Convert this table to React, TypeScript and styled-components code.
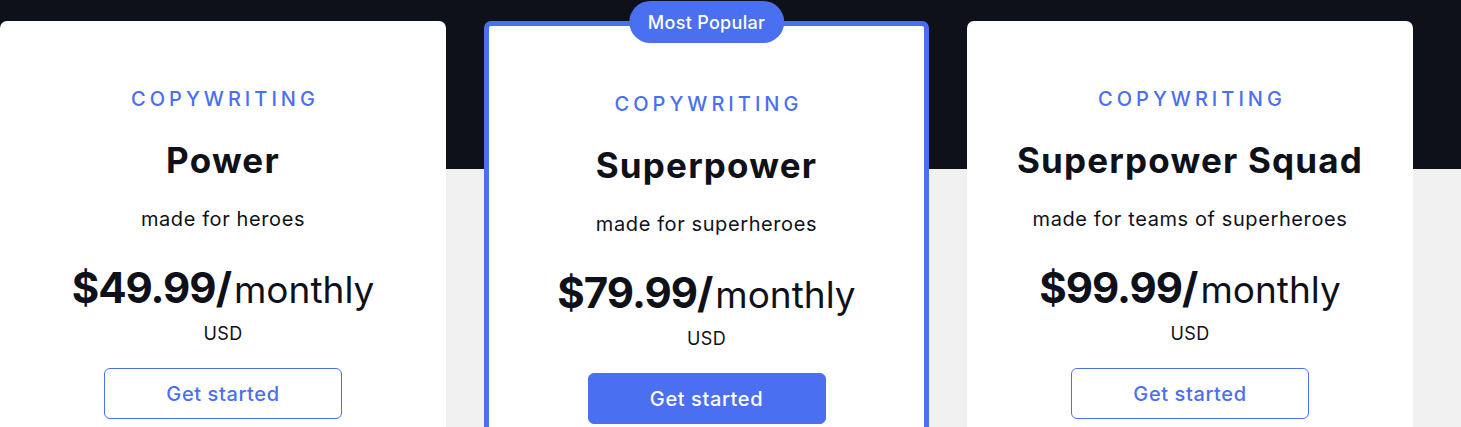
import styled, { createGlobalStyle } from "styled-components";

const GlobalStyle = createGlobalStyle`
  html, body {
    margin: 0;
    padding: 0;
    background: #f0f0f0;
    overflow: hidden;
  }
  * {
    box-sizing: border-box;
  }
`;

const BLUE = "#4a6ff0";
const INK = "#0f111a";

interface Plan {
  category: string;
  name: string;
  tagline: string;
  price: string;
  period: string;
  currency: string;
  featured?: boolean;
}

const plans: Plan[] = [
  {
    category: "COPYWRITING",
    name: "Power",
    tagline: "made for heroes",
    price: "$49.99/",
    period: "monthly",
    currency: "USD",
  },
  {
    category: "COPYWRITING",
    name: "Superpower",
    tagline: "made for superheroes",
    price: "$79.99/",
    period: "monthly",
    currency: "USD",
    featured: true,
  },
  {
    category: "COPYWRITING",
    name: "Superpower Squad",
    tagline: "made for teams of superheroes",
    price: "$99.99/",
    period: "monthly",
    currency: "USD",
  },
];

const PlanCard = ({ plan }: { plan: Plan }) => {
  return (
    <Card $featured={plan.featured}>
      {plan.featured && <Badge>Most Popular</Badge>}
      <Category>{plan.category}</Category>
      <PlanName>{plan.name}</PlanName>
      <Tagline>{plan.tagline}</Tagline>
      <PriceRow>
        <Amount>{plan.price}</Amount>
        <Period>{plan.period}</Period>
      </PriceRow>
      <Currency>{plan.currency}</Currency>
      <StartButton $filled={plan.featured}>Get started</StartButton>
    </Card>
  );
};

export default function App() {
  return (
    <>
      <GlobalStyle />
      <Section>
        <CardRow>
          {plans.map((p) => (
            <PlanCard key={p.name} plan={p} />
          ))}
        </CardRow>
      </Section>
    </>
  );
}

const Section = styled.section`
  width: 100%;
  height: 427px;
  overflow: hidden;
  background: linear-gradient(to bottom, ${INK} 0, ${INK} 169px, #f0f0f0 169px);
  padding-top: 21px;
  font-family: "Inter", "Liberation Sans", sans-serif;
  color: ${INK};
`;

const CardRow = styled.div`
  display: flex;
  gap: 38px;
  align-items: flex-start;
`;

const Card = styled.div<{ $featured?: boolean }>`
  position: relative;
  width: ${(p) => (p.$featured ? "445px" : "446px")};
  height: 520px;
  background: #ffffff;
  border-radius: 7px;
  border: ${(p) => (p.$featured ? `5px solid ${BLUE}` : "none")};
  padding-top: 66px;
  display: flex;
  flex-direction: column;
  align-items: center;
  text-align: center;
`;

const Badge = styled.div`
  position: absolute;
  top: -25px;
  left: 50%;
  transform: translateX(-50%);
  height: 42px;
  padding: 0 19px;
  border-radius: 21px;
  background: ${BLUE};
  color: #ffffff;
  font-size: 18px;
  font-weight: 500;
  letter-spacing: 0.3px;
  display: flex;
  align-items: center;
  white-space: nowrap;
`;

const Category = styled.div`
  font-size: 20px;
  line-height: 24px;
  font-weight: 500;
  letter-spacing: 4px;
  margin-right: -4px;
  color: ${BLUE};
`;

const PlanName = styled.h2`
  margin: 29px 0 0;
  font-size: 35px;
  line-height: 40px;
  font-weight: 700;
  letter-spacing: 1.2px;
`;

const Tagline = styled.p`
  margin: 27px 0 0;
  font-size: 20px;
  line-height: 24px;
  font-weight: 400;
  letter-spacing: 0.6px;
`;

const PriceRow = styled.div`
  margin-top: 33px;
  display: flex;
  align-items: baseline;
  line-height: 48px;
`;

const Amount = styled.span`
  font-size: 42px;
  font-weight: 700;
  letter-spacing: -1px;
`;

const Period = styled.span`
  font-size: 37px;
  font-weight: 400;
  margin-left: 3px;
`;

const Currency = styled.div`
  margin-top: 8px;
  font-size: 18px;
  line-height: 24px;
  letter-spacing: 0.4px;
`;

const StartButton = styled.button<{ $filled?: boolean }>`
  margin-top: 22px;
  width: 238px;
  height: 51px;
  border-radius: 6px;
  border: 1px solid ${BLUE};
  background: ${(p) => (p.$filled ? BLUE : "#ffffff")};
  color: ${(p) => (p.$filled ? "#ffffff" : BLUE)};
  font-family: inherit;
  font-size: 20px;
  font-weight: 500;
  letter-spacing: 0.6px;
  cursor: pointer;
`;
